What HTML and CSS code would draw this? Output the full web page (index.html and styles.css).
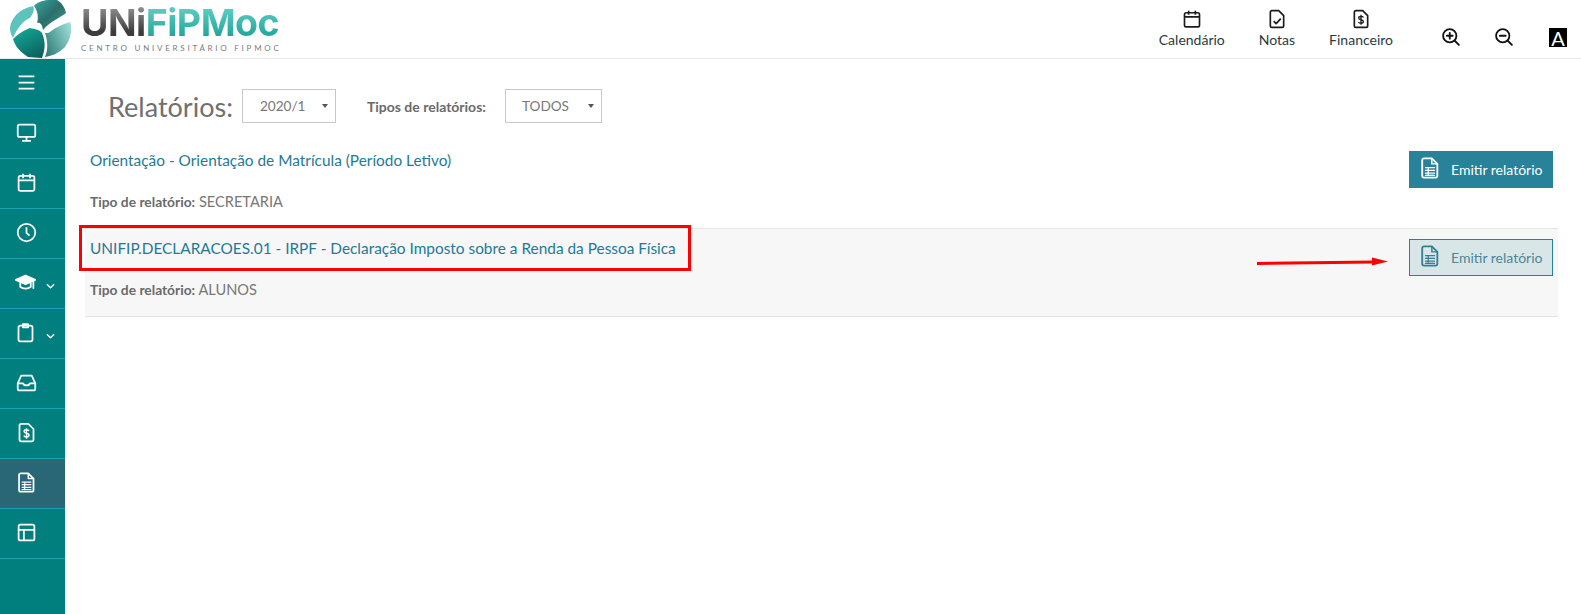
FILE: index.html
```html
<!DOCTYPE html>
<html lang="pt-BR">
<head>
    <meta charset="UTF-8">
    <title>Relatórios</title>
    <link rel="stylesheet" href="styles.css">
</head>
<body>
    <svg class="defs" width="0" height="0">
        <symbol id="i-calendar" viewBox="0 0 24 24" fill="none" stroke="currentColor" stroke-width="2" stroke-linejoin="round">
            <rect x="3" y="4.500" width="18" height="17" rx="2"/>
            <path d="M3 9.500h18M8 2v5M16 2v5"/>
        </symbol>
        <symbol id="i-dollar" viewBox="0 0 24 24" fill="none" stroke="currentColor" stroke-width="2" stroke-linejoin="round">
            <path d="M6 2h8l6 6v12a2 2 0 0 1-2 2H6a2 2 0 0 1-2-2V4a2 2 0 0 1 2-2z"/>
            <path d="M15 10.200c-.6-1-1.600-1.400-3-1.400-1.600 0-2.800.7-2.800 2s1.200 1.800 2.800 2.100 2.900.9 2.900 2.200-1.300 2-2.900 2c-1.400 0-2.500-.5-3.100-1.500M12 7v12" stroke-width="1.600"/>
        </symbol>
        <symbol id="i-report" viewBox="0 0 24 24" fill="none" stroke="currentColor" stroke-width="2" stroke-linejoin="round">
            <path d="M5.500 1.500h8.500l6 6v13a2 2 0 0 1-2 2H5.500a2 2 0 0 1-2-2v-17a2 2 0 0 1 2-2z"/>
            <path d="M14 1.500v6h6" stroke-width="1.600"/>
            <path d="M6.500 11.500h11M6.500 14.500h11M6.500 17.500h11M6.500 20h11M10 11v9" stroke-width="1.300"/>
        </symbol>
    </svg>

    <header class="topbar">
        <a class="brand">
            <svg class="brand-ball" viewBox="0 0 62 58">
                <defs>
                    <linearGradient id="ballDark" x1="0" y1="0" x2="1" y2="1">
                        <stop offset="0" stop-color="#37a89f"/>
                        <stop offset="0.500" stop-color="#2b6f6c"/>
                        <stop offset="1" stop-color="#3a9d95"/>
                    </linearGradient>
                    <linearGradient id="ballMain" x1="0.200" y1="0" x2="0.800" y2="1">
                        <stop offset="0" stop-color="#14a899"/>
                        <stop offset="1" stop-color="#0d5f5c"/>
                    </linearGradient>
                    <linearGradient id="ballRight" x1="0" y1="0.800" x2="1" y2="0.200">
                        <stop offset="0" stop-color="#2f7f7a"/>
                        <stop offset="1" stop-color="#9adcd4"/>
                    </linearGradient>
                </defs>
                <path fill="url(#ballDark)" d="M24 6C28 1 38-1 47 0 52 3 55 8 56 13 50 18 42 20 33 30 32 24 30 22 27 23 29 16 27 10 24 6Z"/>
                <path fill="#5cc4bc" d="M0 28C1 19 8 9 23 6 25 9 23 14 20 18 14 20 7 28 3 38 1 35 0 31 0 28Z"/>
                <path fill="url(#ballMain)" d="M3 39C9 33 15 30 20 28 25 29 30 30 32 33 35 40 36 48 32 58 26 58 22 57 18 57 10 52 5 46 3 39Z"/>
                <path fill="url(#ballRight)" d="M40 32C46 27 53 24 60 22 63 30 60 40 55 47 49 53 42 56 35 57 38 50 38 42 35 33 37 33 39 33 40 32Z"/>
            </svg>
            <span class="brand-text">
                <span class="brand-name"><span class="brand-uni">UNi</span><span class="brand-fip">FiPMoc</span></span>
                <span class="brand-sub">CENTRO UNIVERSITÁRIO FIPMOC</span>
            </span>
        </a>
        <nav class="topnav">
            <a class="topnav-item calendario"><svg><use href="#i-calendar"/></svg>Calendário</a>
            <a class="topnav-item notas">
                <svg viewBox="0 0 24 24" fill="none" stroke="currentColor" stroke-width="2" stroke-linejoin="round">
                    <path d="M6 2h8l6 6v12a2 2 0 0 1-2 2H6a2 2 0 0 1-2-2V4a2 2 0 0 1 2-2z"/>
                    <path d="M8 14.500l3 3 5.500-6"/>
                </svg>Notas</a>
            <a class="topnav-item financeiro"><svg><use href="#i-dollar"/></svg>Financeiro</a>
        </nav>
        <div class="tools">
            <svg class="tool" viewBox="0 0 24 24" fill="none" stroke="currentColor" stroke-width="2.200" stroke-linecap="round">
                <circle cx="10.500" cy="10.500" r="8"/><path d="M16.500 16.500l5 5M10.500 7v7M7 10.500h7"/>
            </svg>
            <svg class="tool" viewBox="0 0 24 24" fill="none" stroke="currentColor" stroke-width="2.200" stroke-linecap="round">
                <circle cx="10.500" cy="10.500" r="8"/><path d="M16.500 16.500l5 5M7 10.500h7"/>
            </svg>
            <span class="contrast">A</span>
        </div>
    </header>

    <div class="layout">
        <aside class="sidebar">
            <a class="side-item">
                <svg viewBox="0 0 24 24"><path d="M3 5h18M3 12h18M3 19h18"/></svg>
            </a>
            <a class="side-item">
                <svg viewBox="0 0 24 24"><rect x="2" y="3" width="20" height="14" rx="2"/><path d="M12 17v4M7 21.500h10"/></svg>
            </a>
            <a class="side-item"><svg><use href="#i-calendar"/></svg></a>
            <a class="side-item">
                <svg viewBox="0 0 24 24"><circle cx="12" cy="12" r="10"/><path d="M12 6v6.500l3.500 3"/></svg>
            </a>
            <a class="side-item has-sub">
                <svg viewBox="0 0 24 24"><path d="M1 9l11-5 11 5-11 5z" fill="#fff"/><path d="M6 12v5c3 2.500 9 2.500 12 0v-5M21 10v9"/></svg>
                <svg class="chev" viewBox="0 0 10 6"><path d="M1 1l4 4 4-4"/></svg>
            </a>
            <a class="side-item has-sub">
                <svg viewBox="0 0 24 24"><rect x="4" y="4" width="16" height="18" rx="2"/><path d="M9 2.500h6v3.500H9z"/></svg>
                <svg class="chev" viewBox="0 0 10 6"><path d="M1 1l4 4 4-4"/></svg>
            </a>
            <a class="side-item">
                <svg viewBox="0 0 24 24"><path d="M6 4h12l4 9v6a2 2 0 0 1-2 2H4a2 2 0 0 1-2-2v-6zM2 13h6c1 3 7 3 8 0h6"/></svg>
            </a>
            <a class="side-item"><svg><use href="#i-dollar"/></svg></a>
            <a class="side-item active"><svg><use href="#i-report"/></svg></a>
            <a class="side-item">
                <svg viewBox="0 0 24 24"><rect x="3" y="3" width="18" height="18" rx="2"/><path d="M3 9h18M9 9v12"/></svg>
            </a>
        </aside>

        <main class="content">
            <div class="toolbar">
                <h1>Relatórios:</h1>
                <div class="select-box year">2020/1</div>
                <label>Tipos de relatórios:</label>
                <div class="select-box type">TODOS</div>
            </div>

            <div class="report-row">
                <div class="report-info">
                    <a class="report-link">Orientação - Orientação de Matrícula (Período Letivo)</a>
                    <p class="report-type"><b>Tipo de relatório:</b> SECRETARIA</p>
                </div>
                <button class="emit-btn"><svg><use href="#i-report"/></svg>Emitir relatório</button>
            </div>

            <div class="report-row hovered">
                <div class="report-info">
                    <a class="report-link">UNIFIP.DECLARACOES.01 - IRPF - Declaração Imposto sobre a Renda da Pessoa Física</a>
                    <p class="report-type"><b>Tipo de relatório:</b> ALUNOS</p>
                </div>
                <button class="emit-btn outline"><svg><use href="#i-report"/></svg>Emitir relatório</button>
            </div>
        </main>
    </div>

    <!-- marcações por cima da captura -->
    <div class="mark-box"></div>
    <svg class="mark-arrow" width="134" height="12" viewBox="0 0 134 12">
        <path d="M1 7.500L118 6" stroke="#f00" stroke-width="3" fill="none"/>
        <path d="M116 1.500L132 5.500 116 9.500z" fill="#f00"/>
    </svg>
</body>
</html>
```

FILE: styles.css
```css
:root {
    --teal: #017f7f;
    --teal-active: #2a6776;
    --side-line: #1aa3b5;
    --link: #1f7a96;
    --btn: #27829a;
    --text: #777;
    --line: #e4e4e4;
}

* {
    box-sizing: border-box;
}

body {
    margin: 0;
    height: 614px;
    overflow: hidden;
    background: #fff;
    font-family: "Lato", "Open Sans", sans-serif;
    font-size: 14.500px;
    color: var(--text);
}

.defs {
    position: absolute;
}

.topbar {
    height: 59px;
    display: flex;
    align-items: flex-start;
    border-bottom: 1px solid #e8e8e8;
}

.brand {
    display: flex;
    margin-left: 10px;
}

.brand-ball {
    width: 62px;
    height: 58px;
}

.brand-text {
    display: flex;
    flex-direction: column;
    margin-left: 9px;
    width: 198px;
}

.brand-name {
    font-family: "Inter", sans-serif;
    font-size: 37.500px;
    font-weight: 700;
    line-height: 40px;
    letter-spacing: -0.500px;
    margin-top: 3px;
    white-space: nowrap;
}

.brand-uni {
    background: linear-gradient(#a9a9a9, #3c3c3c 70%);
    -webkit-background-clip: text;
    background-clip: text;
    color: transparent;
}

.brand-fip {
    background: linear-gradient(#6fd8cd, #0f9a90);
    -webkit-background-clip: text;
    background-clip: text;
    color: transparent;
}

.brand-sub {
    font-size: 8px;
    line-height: 10px;
    letter-spacing: 2.760px;
    color: #7d7d7d;
    white-space: nowrap;
}

.topnav {
    display: flex;
    margin-left: auto;
    margin-top: 9px;
}

.topnav-item {
    display: flex;
    flex-direction: column;
    align-items: center;
    font-size: 14px;
    line-height: 18px;
    color: #2b3a42;
    margin-left: 34px;
}

.topnav-item svg {
    width: 20px;
    height: 20px;
    margin-bottom: 2px;
    color: #1c1c1c;
}

.tools {
    display: flex;
    align-items: center;
    gap: 33px;
    margin: 27px 14px 0 48px;
}

.tool {
    width: 20px;
    height: 20px;
    color: #111;
}

.contrast {
    width: 18px;
    height: 19px;
    margin-left: 2px;
    background: #000;
    color: #fff;
    font-size: 20px;
    line-height: 20px;
    text-align: center;
}

.layout {
    display: flex;
    height: 555px;
}

.sidebar {
    width: 65px;
    background: var(--teal);
    flex-shrink: 0;
}

.side-item {
    display: flex;
    align-items: center;
    justify-content: center;
    position: relative;
    height: 50px;
    padding-bottom: 2px;
    border-bottom: 1px solid var(--side-line);
    color: #fff;
}

.side-item.active {
    background: var(--teal-active);
}

.side-item svg {
    width: 21px;
    height: 21px;
    margin-right: 13px;
    fill: none;
    stroke: #fff;
    stroke-width: 2;
    stroke-linejoin: round;
}

.side-item.has-sub svg:first-child {
    margin-right: 15px;
}

.side-item .chev {
    position: absolute;
    left: 46px;
    top: 24px;
    width: 9px;
    height: 6px;
    margin: 0;
    stroke-width: 1.500;
}

.content {
    flex: 1;
    padding: 30px 23px 0 20px;
}

.toolbar {
    display: flex;
    align-items: center;
    height: 34px;
    padding-left: 23px;
    margin-bottom: 18px;
}

.toolbar h1 {
    margin: 0 9px 0 0;
    font-size: 27px;
    font-weight: 400;
    color: #707070;
}

.toolbar label {
    margin: 0 19px 0 31px;
    font-weight: 700;
    font-size: 14px;
    color: #6a6a6a;
}

.select-box {
    position: relative;
    height: 34px;
    line-height: 32px;
    border: 1px solid #c9c9c9;
    color: #777;
    font-size: 13.600px;
}

.select-box::after {
    content: "";
    position: absolute;
    top: 14px;
    right: 7px;
    border-style: solid;
    border-width: 4px 3px 0;
    border-color: #555 transparent transparent;
}

.select-box.year {
    width: 94px;
    padding-left: 17px;
}

.select-box.type {
    width: 97px;
    padding-left: 16px;
}

.report-row {
    display: flex;
    justify-content: space-between;
    align-items: flex-start;
    height: 88px;
    padding: 9px 5px 0 5px;
    border-bottom: 1px solid var(--line);
}

.report-row.hovered {
    background: #f7f7f7;
}

.report-link {
    display: block;
    color: var(--link);
    font-size: 15.400px;
    line-height: 21px;
}

.report-type {
    margin: 20px 0 0;
    line-height: 21px;
    font-size: 14.600px;
}

.report-type b {
    font-weight: 700;
    font-size: 13.800px;
    color: #6a6a6a;
}

.emit-btn {
    display: flex;
    align-items: center;
    height: 37px;
    width: 144px;
    margin-top: 1px;
    padding: 0 0 0 9px;
    border: 1px solid var(--btn);
    background: var(--btn);
    color: #fff;
    font-family: inherit;
    font-size: 14px;
}

.emit-btn svg {
    width: 22px;
    height: 22px;
    margin: -3px 10px 0 0;
    color: inherit;
}

.emit-btn.outline {
    background: #d9e6e8;
    color: #4f8596;
}

.emit-btn.outline svg {
    color: #337f95;
}

.mark-box {
    position: absolute;
    left: 79px;
    top: 225px;
    width: 612px;
    height: 46px;
    border: 3px solid #f00;
}

.mark-arrow {
    position: absolute;
    left: 1256px;
    top: 256px;
}
```
